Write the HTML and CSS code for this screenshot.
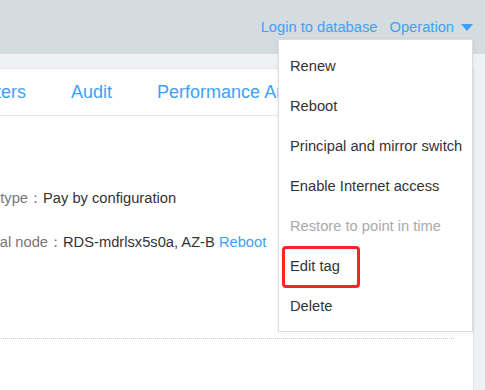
FILE: index.html
```html
<!DOCTYPE html>
<html lang="en">
<head>
    <meta charset="UTF-8">
    <meta name="viewport" content="width=device-width, initial-scale=1.0">
    <title>Instance details</title>
    <link rel="stylesheet" href="styles.css">
</head>
<body>
    <div class="topbar">
        <a class="top-link" href="#">Login to database</a>
        <a class="top-link op-link" href="#">Operation <span class="caret"></span></a>
    </div>

    <div class="page">
        <div class="panel">
            <div class="tabs">
                <span class="tab">Parameters</span>
                <span class="tab">Audit</span>
                <span class="tab">Performance Analysis</span>
            </div>
            <div class="info">
                <div class="info-row">
                    <span class="info-label">Billing type：</span>
                    <span class="info-value">Pay by configuration</span>
                </div>
                <div class="info-row">
                    <span class="info-label">Principal node：</span>
                    <span class="info-value">RDS-mdrlsx5s0a, AZ-B <a class="inline-link" href="#">Reboot</a></span>
                </div>
            </div>
        </div>
    </div>

    <div class="dropdown">
        <div class="menu-item">Renew</div>
        <div class="menu-item">Reboot</div>
        <div class="menu-item">Principal and mirror switch</div>
        <div class="menu-item">Enable Internet access</div>
        <div class="menu-item disabled">Restore to point in time</div>
        <div class="menu-item marked">Edit tag</div>
        <div class="menu-item">Delete</div>
    </div>
</body>
</html>
```

FILE: styles.css
```css
body {
    font-family: 'Liberation Sans', Arial, sans-serif;
    margin: 0;
    padding: 0;
    width: 485px;
    height: 390px;
    overflow: hidden;
    background-color: #f0f1f4;
    position: relative;
    color: #333;
}

a {
    text-decoration: none;
}

.topbar {
    height: 54px;
    background-color: #d5dce0;
    display: flex;
    justify-content: flex-end;
    align-items: center;
    padding-right: 12px;
    gap: 12px;
    box-sizing: border-box;
}

.top-link {
    color: #3ea1f8;
    font-size: 14.7px;
    display: flex;
    align-items: center;
}

.caret {
    width: 0;
    height: 0;
    border-left: 6px solid transparent;
    border-right: 6px solid transparent;
    border-top: 7px solid #3ea1f8;
    margin-left: 7px;
}

.page {
    padding: 14px 11px 0 0;
}

.panel {
    background-color: white;
    border-top: 1px solid #e2e6ea;
    border-right: 1px solid #e2e6ea;
    margin-left: -110px;
    height: 330px;
}

.tabs {
    display: flex;
    gap: 45px;
    height: 46px;
    align-items: center;
    border-bottom: 1px solid #e2e6ea;
    padding-left: 43px;
    white-space: nowrap;
}

.tab {
    color: #3ea1f8;
    font-size: 18px;
}

.info {
    padding: 60px 0 74px 0;
    margin-right: 19px;
    border-bottom: 1px dotted #c8ccd2;
}

.info-row {
    font-size: 14.7px;
    height: 44px;
    display: flex;
    align-items: center;
}

.info-label {
    color: #777;
    width: 153px;
    text-align: right;
}

.info-row + .info-row .info-label {
    width: 173px;
}

.info-value {
    color: #333;
}

.inline-link {
    color: #3ea1f8;
}

.dropdown {
    position: absolute;
    top: 39px;
    right: 12px;
    width: 195px;
    box-sizing: border-box;
    background-color: white;
    border: 1px solid #dadde1;
    box-shadow: 0 1px 4px rgba(0, 0, 0, 0.08);
    padding: 6px 0 5px 0;
}

.menu-item {
    height: 40px;
    line-height: 40px;
    padding-left: 11px;
    font-size: 14.7px;
    color: #333;
    position: relative;
}

.menu-item.disabled {
    color: #aaa;
}

.menu-item.marked::before {
    content: "";
    position: absolute;
    left: 3px;
    top: 0;
    width: 78px;
    height: 42px;
    box-sizing: border-box;
    border: 3px solid #f22;
    border-radius: 4px;
}
```
